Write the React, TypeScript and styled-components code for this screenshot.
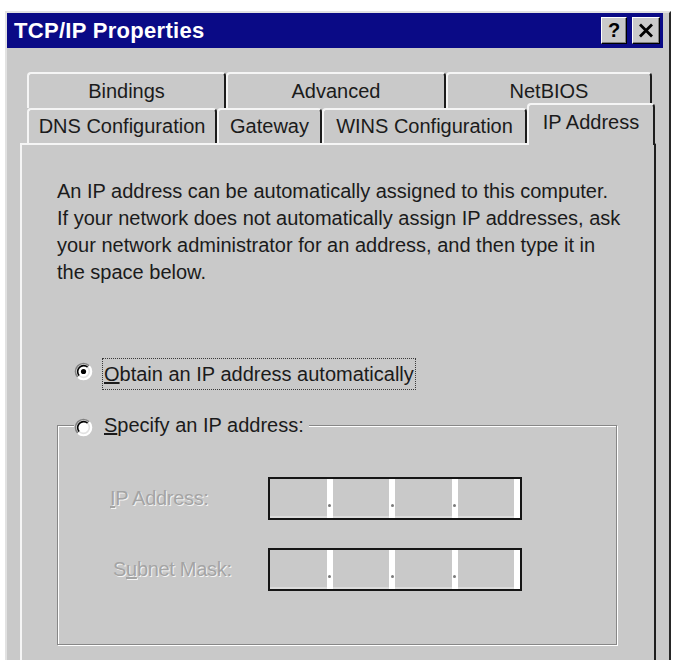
import React from "react";
import styled, { createGlobalStyle } from "styled-components";

const FACE = "#c9c9c9";
const TEXT = "#1b1b1b";
const LIGHT = "#f5f5f5";
const DARK = "#1d1d1d";
const SHADE = "#878787";

const GlobalStyle = createGlobalStyle`
  html, body {
    margin: 0;
    padding: 0;
    background: #ffffff;
    overflow: hidden;
  }
  body {
    font-family: "Liberation Sans", Arial, sans-serif;
  }
`;

const Window = styled.div`
  margin: 11px 0 0 5px;
  width: 666px;
  height: 649px;
  box-sizing: border-box;
  background: ${FACE};
  border-top: 2px solid #e2e2e2;
  border-left: 2px solid #e2e2e2;
  border-right: 2px solid #262626;
  display: flex;
  flex-direction: column;
`;

const TitleBar = styled.div`
  height: 35px;
  margin-right: 6px;
  padding: 0 3px 0 7px;
  background: #0a0a86;
  display: flex;
  align-items: center;
`;

const Title = styled.div`
  color: #ffffff;
  font-size: 22px;
  font-weight: bold;
  letter-spacing: 0.3px;
`;

const Controls = styled.div`
  margin-left: auto;
  display: flex;
  gap: 5px;
`;

const CaptionButton = styled.div<{ $w: number }>`
  width: ${(p) => p.$w}px;
  height: 27px;
  box-sizing: border-box;
  background: ${FACE};
  border-top: 1px solid #ffffff;
  border-left: 1px solid #ffffff;
  border-right: 1px solid #000000;
  border-bottom: 1px solid #000000;
  box-shadow: inset -1px -1px 0 #808080;
  display: flex;
  align-items: center;
  justify-content: center;
  color: #000000;
  font-size: 20px;
  font-weight: bold;
`;

const Body = styled.div`
  flex: 1;
  min-height: 0;
  padding: 24px 13px 0 13px;
  display: flex;
  flex-direction: column;
`;

const TabRow = styled.div<{ $h: number }>`
  flex: none;
  height: ${(p) => p.$h}px;
  padding-left: 7px;
  display: flex;
  align-items: flex-end;
`;

const Tab = styled.div<{ $w: number; $selected?: boolean }>`
  width: ${(p) => p.$w}px;
  height: ${(p) => (p.$selected ? "42px" : "100%")};
  margin-bottom: ${(p) => (p.$selected ? "-2px" : "0")};
  padding-bottom: ${(p) => (p.$selected ? "6px" : "0")};
  position: ${(p) => (p.$selected ? "relative" : "static")};
  z-index: ${(p) => (p.$selected ? 1 : "auto")};
  box-sizing: border-box;
  background: ${FACE};
  border-top: 2px solid ${LIGHT};
  border-left: 2px solid ${LIGHT};
  border-right: 2px solid ${DARK};
  border-radius: 4px 4px 0 0;
  display: flex;
  align-items: center;
  justify-content: center;
  font-size: 20px;
  color: ${TEXT};
  white-space: nowrap;
`;

const Panel = styled.div`
  flex: 1;
  min-height: 0;
  overflow: hidden;
  box-sizing: border-box;
  border-top: 2px solid ${LIGHT};
  border-left: 2px solid ${LIGHT};
  border-right: 2px solid ${DARK};
  padding: 33px 0 0 35px;
  display: flex;
  flex-direction: column;
  align-items: flex-start;
`;

const Intro = styled.p`
  margin: 0;
  font-size: 20px;
  line-height: 27px;
  color: ${TEXT};
  white-space: nowrap;
`;

const RadioRow = styled.div`
  margin-top: 72px;
  padding-left: 17px;
  height: 32px;
  display: flex;
  align-items: flex-start;
`;

const RadioMark = styled.svg`
  flex: none;
  margin-top: 4px;
`;

const RadioLabel = styled.span<{ $focused?: boolean }>`
  margin-left: 9px;
  height: 32px;
  box-sizing: border-box;
  padding: 0 1px;
  border: 1px dotted ${(p) => (p.$focused ? "#3a3a3a" : "transparent")};
  display: flex;
  align-items: center;
  font-size: 20px;
  color: ${TEXT};
  white-space: nowrap;
`;

const GroupBox = styled.fieldset`
  flex: none;
  margin: 21px 0 0 0;
  padding: 38px 0 53px 0;
  width: 560px;
  box-sizing: border-box;
  min-inline-size: auto;
  border: 1px solid ${SHADE};
  box-shadow: inset 1px 1px 0 #ffffff, 1px 1px 0 #ffffff;
`;

const GroupLegend = styled.legend`
  margin-left: 16px;
  padding: 0 3px 0 0;
  height: 28px;
  background: ${FACE};
  display: flex;
  align-items: center;
  font-size: 20px;
  color: ${TEXT};
  white-space: nowrap;
`;

const FieldGrid = styled.div`
  padding-left: 52px;
  display: grid;
  grid-template-columns: 158px 254px;
  grid-auto-rows: 43px;
  row-gap: 28px;
  align-items: center;
`;

const DisabledLabel = styled.span<{ $nudge?: number }>`
  padding-left: ${(p) => p.$nudge || 0}px;
  font-size: 20px;
  color: #a4a4a4;
  text-shadow: 1px 1px 0 #f4f4f4;
  letter-spacing: -0.3px;
  white-space: nowrap;
`;

const AddressBox = styled.div`
  height: 43px;
  box-sizing: border-box;
  border: 2px solid #151515;
  background: ${FACE};
  box-shadow: inset 0 -2px 0 #dcdcdc;
  display: flex;
`;

const Octet = styled.div`
  flex: 1;
`;

const Separator = styled.div<{ $dot?: boolean }>`
  width: 6px;
  background: #ffffff;
  display: flex;
  flex-direction: column;
  align-items: center;
  justify-content: flex-end;
  padding-bottom: 11px;
  box-sizing: border-box;

  &::after {
    content: "";
    display: ${(p) => (p.$dot ? "block" : "none")};
    width: 3px;
    height: 3px;
    border-radius: 50%;
    background: #7a7a7a;
  }
`;

function Radio({ checked }: { checked?: boolean }) {
  return (
    <RadioMark width="19" height="19" viewBox="0 0 19 19">
      <circle cx="9.5" cy="9.5" r="8" fill="#ffffff" />
      <path d="M3.84 15.16 A8 8 0 0 1 15.16 3.84" fill="none" stroke="#808080" strokeWidth="1.6" />
      <path d="M15.16 3.84 A8 8 0 0 1 3.84 15.16" fill="none" stroke="#ffffff" strokeWidth="1.6" />
      <path d="M5.26 13.74 A6 6 0 0 1 13.74 5.26" fill="none" stroke="#000000" strokeWidth="1.6" />
      <path d="M13.74 5.26 A6 6 0 0 1 5.26 13.74" fill="none" stroke="#e2e2e2" strokeWidth="1.6" />
      {checked && <circle cx="9.5" cy="9.5" r="2.6" fill="#000000" />}
    </RadioMark>
  );
}

function AddressField() {
  return (
    <AddressBox>
      <Octet />
      <Separator $dot />
      <Octet />
      <Separator $dot />
      <Octet />
      <Separator $dot />
      <Octet />
      <Separator />
    </AddressBox>
  );
}

const backTabs = [
  { label: "Bindings", w: 199 },
  { label: "Advanced", w: 220 },
  { label: "NetBIOS", w: 206 },
];

const frontTabs = [
  { label: "DNS Configuration", w: 190 },
  { label: "Gateway", w: 105 },
  { label: "WINS Configuration", w: 205 },
  { label: "IP Address", w: 128, selected: true },
];

export default function App() {
  return (
    <>
      <GlobalStyle />
      <Window>
        <TitleBar>
          <Title>TCP/IP Properties</Title>
          <Controls>
            <CaptionButton $w={26}>?</CaptionButton>
            <CaptionButton $w={28}>
              <svg width="16" height="15" viewBox="0 0 16 15">
                <path d="M2 1.5 L14 13.5 M14 1.5 L2 13.5" stroke="#000" strokeWidth="2.8" />
              </svg>
            </CaptionButton>
          </Controls>
        </TitleBar>

        <Body>
          <TabRow $h={36}>
            {backTabs.map((t) => (
              <Tab key={t.label} $w={t.w}>
                {t.label}
              </Tab>
            ))}
          </TabRow>
          <TabRow $h={35}>
            {frontTabs.map((t) => (
              <Tab key={t.label} $w={t.w} $selected={t.selected}>
                {t.label}
              </Tab>
            ))}
          </TabRow>

          <Panel>
            <Intro>
              An IP address can be automatically assigned to this computer.
              <br />
              If your network does not automatically assign IP addresses, ask
              <br />
              your network administrator for an address, and then type it in
              <br />
              the space below.
            </Intro>

            <RadioRow>
              <Radio checked />
              <RadioLabel $focused>
                <u>O</u>btain an IP address automatically
              </RadioLabel>
            </RadioRow>

            <GroupBox>
              <GroupLegend>
                <Radio />
                <RadioLabel>
                  <u>S</u>pecify an IP address:
                </RadioLabel>
              </GroupLegend>
              <FieldGrid>
                <DisabledLabel>
                  <u>I</u>P Address:
                </DisabledLabel>
                <AddressField />
                <DisabledLabel $nudge={3}>
                  S<u>u</u>bnet Mask:
                </DisabledLabel>
                <AddressField />
              </FieldGrid>
            </GroupBox>
          </Panel>
        </Body>
      </Window>
    </>
  );
}
